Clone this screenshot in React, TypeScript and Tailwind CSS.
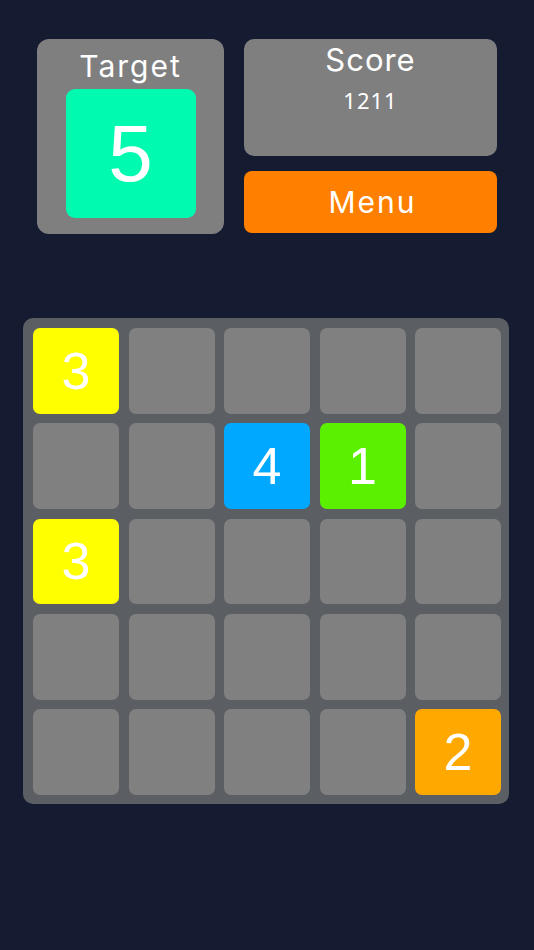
import React from "react";

const grid: (number | null)[][] = [
  [3, null, null, null, null],
  [null, null, 4, 1, null],
  [3, null, null, null, null],
  [null, null, null, null, null],
  [null, null, null, null, 2],
];

const colorFor = (n: number | null) => {
  switch (n) {
    case 1:
      return "bg-[#5af000]";
    case 2:
      return "bg-[#ffa800]";
    case 3:
      return "bg-[#ffff00]";
    case 4:
      return "bg-[#00a8ff]";
    case 5:
      return "bg-[#00fbb0]";
    default:
      return "bg-[#808080]";
  }
};

export default function App() {
  return (
    <div className="w-[534px] h-[950px] bg-[#151b30] pt-[39px] overflow-hidden" style={{ fontFamily: "Inter, 'Noto Sans', sans-serif" }}>
      <div className="flex pl-[37px] gap-[20px]">
        <div className="w-[187px] h-[195px] bg-[#7f7f80] rounded-[12px] flex flex-col items-center">
          <div className="h-[50px] flex items-center text-white text-[30px] tracking-[2px] leading-none pt-[4px]">Target</div>
          <div className="w-[130px] h-[129px] rounded-[9px] bg-[#00fbb0] flex items-center justify-center text-white text-[80px] leading-none" style={{ fontFamily: "'Liberation Sans', Arial, sans-serif" }}>
            5
          </div>
        </div>
        <div className="w-[253px] flex flex-col gap-[15px]">
          <div className="h-[117px] bg-[#7f7f80] rounded-[10px] flex flex-col items-center text-white">
            <div className="mt-[1px] text-[31px] leading-[40px] tracking-[1px]">Score</div>
            <div className="mt-[7px] text-[22px] leading-[26px] tracking-[1px]" style={{ fontFamily: "'Noto Sans', sans-serif" }}>1211</div>
          </div>
          <div className="h-[62px] bg-[#ff8000] rounded-[8px] flex items-center justify-center text-white text-[30px] tracking-[2px] leading-none pl-[4px]">
            Menu
          </div>
        </div>
      </div>
      <div className="ml-[23px] mt-[84px] w-[486px] h-[486px] bg-[#5b5e63] rounded-[10px] pl-[10px] pr-[8px] pt-[10px] pb-[9px] grid grid-cols-5 grid-rows-5 gap-[9.5px]">
        {grid.flat().map((n, i) => (
          <div
            key={i}
            className={`${colorFor(n)} rounded-[7px] flex items-center justify-center text-white text-[52px] leading-none`}
            style={{ fontFamily: "'Liberation Sans', Arial, sans-serif" }}
          >
            {n ?? ""}
          </div>
        ))}
      </div>
    </div>
  );
}
